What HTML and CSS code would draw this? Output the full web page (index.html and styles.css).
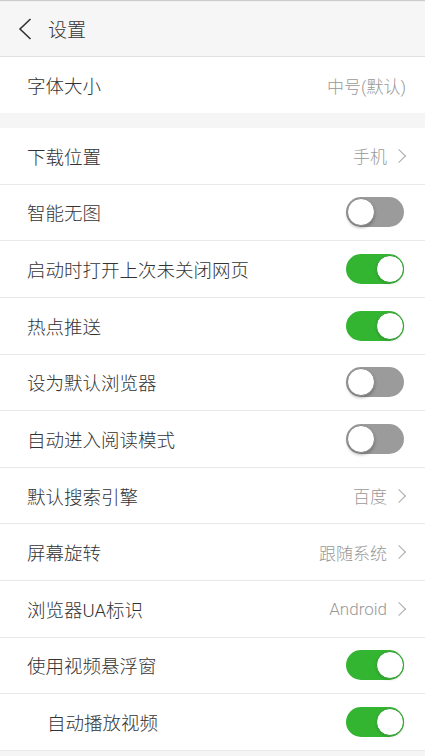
FILE: index.html
```html
<!DOCTYPE html>
<html lang="zh-CN">
<head>
    <meta charset="UTF-8">
    <meta name="viewport" content="width=device-width, initial-scale=1.0">
    <title>设置</title>
    <link rel="stylesheet" href="styles.css">
</head>
<body>
    <header class="topbar">
        <svg class="back" width="14" height="22" viewBox="0 0 14 22">
            <path d="M12.5 1 L2 11 L12.5 21" fill="none" stroke="#333" stroke-width="1.6"/>
        </svg>
        <span class="title">设置</span>
    </header>

    <div class="group">
        <div class="row">
            <span class="label">字体大小</span>
            <span class="value">中号(默认)</span>
        </div>
    </div>

    <div class="group list">
        <div class="row">
            <span class="label">下载位置</span>
            <span class="value">手机<i class="chev"></i></span>
        </div>
        <div class="row">
            <span class="label">智能无图</span>
            <span class="switch"></span>
        </div>
        <div class="row">
            <span class="label">启动时打开上次未关闭网页</span>
            <span class="switch on"></span>
        </div>
        <div class="row">
            <span class="label">热点推送</span>
            <span class="switch on"></span>
        </div>
        <div class="row">
            <span class="label">设为默认浏览器</span>
            <span class="switch"></span>
        </div>
        <div class="row">
            <span class="label">自动进入阅读模式</span>
            <span class="switch"></span>
        </div>
        <div class="row">
            <span class="label">默认搜索引擎</span>
            <span class="value">百度<i class="chev"></i></span>
        </div>
        <div class="row">
            <span class="label">屏幕旋转</span>
            <span class="value">跟随系统<i class="chev"></i></span>
        </div>
        <div class="row">
            <span class="label">浏览器UA标识</span>
            <span class="value">Android<i class="chev"></i></span>
        </div>
        <div class="row">
            <span class="label">使用视频悬浮窗</span>
            <span class="switch on"></span>
        </div>
        <div class="row sub">
            <span class="label">自动播放视频</span>
            <span class="switch on"></span>
        </div>
    </div>
</body>
</html>
```

FILE: styles.css
```css
body {
    margin: 0;
    background: #f5f5f5;
    font-family: Roboto, "Noto Sans CJK SC", sans-serif;
    font-weight: 300;
    color: #333;
    width: 425px;
    height: 756px;
    overflow: hidden;
}
.topbar {
    height: 56px;
    display: flex;
    align-items: center;
    background: #f6f6f6;
    border-bottom: 1px solid #e2e2e2;
    box-shadow: inset 0 2px 1px -1px #c8c8c8;
}
.back {
    margin-left: 18px;
    margin-top: 1px;
}
.title {
    margin-left: 16px;
    font-size: 19px;
}
.group {
    background: #fff;
}
.list {
    margin-top: 15px;
}
.row {
    display: flex;
    align-items: center;
    justify-content: space-between;
    height: 56px;
    padding: 0 19px 0 27px;
}
.list .row {
    height: 55.64px;
    border-bottom: 1px solid #e8e8e8;
}
.row.sub {
    padding-left: 47px;
}
.label {
    font-size: 18.5px;
    color: #333;
}
.value {
    display: flex;
    align-items: center;
    font-size: 17px;
    color: #999;
}
.chev {
    width: 9px;
    height: 9px;
    margin-left: 7px;
    margin-right: 2px;
    border-top: 1.4px solid #aaa;
    border-right: 1.4px solid #aaa;
    transform: rotate(45deg);
}
.switch {
    position: relative;
    width: 58px;
    height: 30px;
    border-radius: 15px;
    background: #9b9b9b;
    margin-right: 2px;
}
.switch::after {
    content: "";
    position: absolute;
    top: 1px;
    left: 1px;
    width: 26px;
    height: 26px;
    border-radius: 50%;
    background: #fff;
    border: 1px solid #8a8a8a;
    box-shadow: 0 2px 3px rgba(0,0,0,0.25);
}
.switch.on {
    background: #33b532;
}
.switch.on::after {
    left: auto;
    right: 0;
    border-color: #2a9d29;
    box-shadow: 0 1px 2px rgba(0,0,0,0.15);
}
```
